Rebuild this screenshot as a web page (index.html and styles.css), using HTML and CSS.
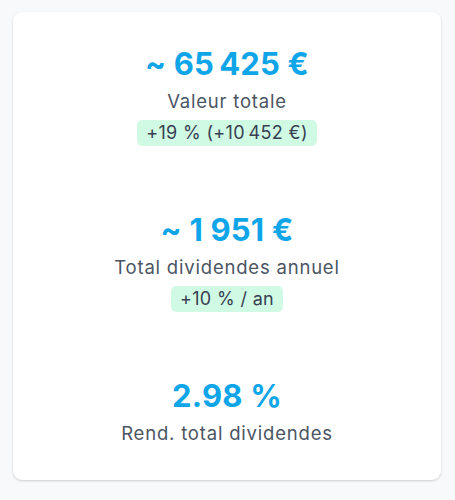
FILE: index.html
```html
<!DOCTYPE html>
<html lang="fr">
<head>
<meta charset="utf-8">
<link rel="stylesheet" href="styles.css">
</head>
<body>
<div class="card">
  <div class="stat">
    <div class="value">~ 65&#8201;425&nbsp;€</div>
    <div class="label">Valeur totale</div>
    <div class="badge">+19&nbsp;% (+10&#8201;452&nbsp;€)</div>
  </div>
  <div class="stat">
    <div class="value">~ 1&nbsp;951&nbsp;€</div>
    <div class="label">Total dividendes annuel</div>
    <div class="badge">+10&nbsp;% / an</div>
  </div>
  <div class="stat">
    <div class="value">2.98 %</div>
    <div class="label">Rend. total dividendes</div>
  </div>
</div>
</body>
</html>
```

FILE: styles.css
```css
html, body {
  margin: 0;
  padding: 0;
  background: #f8f9fb;
  font-family: Inter, "Noto Sans", sans-serif;
}
body {
  padding: 12px 14px 20px 13px;
}
.card {
  background: #ffffff;
  border-radius: 9px;
  box-shadow: 0 1px 3px rgba(0,0,0,0.12), 0 1px 2px rgba(0,0,0,0.06);
  padding: 34px 16px;
  display: flex;
  flex-direction: column;
  gap: 66px;
  height: 400px;
}
.stat {
  display: flex;
  flex-direction: column;
  align-items: center;
  gap: 5px;
}
.value {
  font-size: 31px;
  line-height: 36px;
  font-weight: 700;
  letter-spacing: 0.2px;
  color: #0ea5e9;
}
.label {
  font-size: 18.5px;
  line-height: 28px;
  letter-spacing: 0.8px;
  color: #4b5563;
}
.badge {
  background: #d1fae5;
  color: #374151;
  font-size: 18px;
  line-height: 26px;
  letter-spacing: 0.35px;
  padding: 0 9px;
  border-radius: 5px;
}
```
